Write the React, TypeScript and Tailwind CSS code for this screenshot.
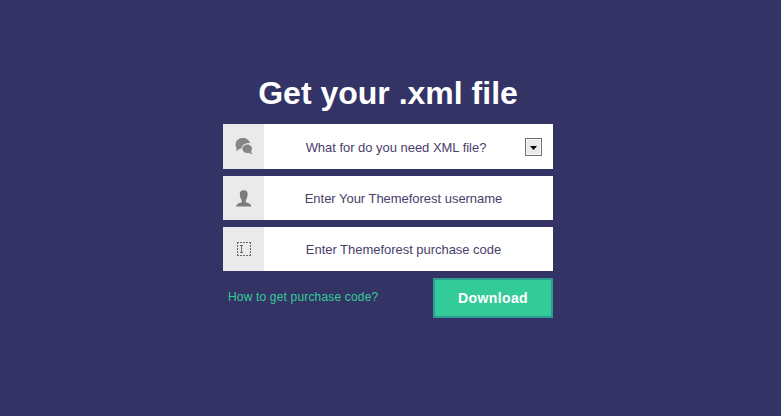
import type { ReactNode } from 'react';

function ChatIcon() {
  return (
    <svg width="18" height="18" viewBox="0 0 18 18" fill="#858585" className="-mt-[2px]">
      <path d="M1 13.800C1.900 12.700 1.700 11.500 1.100 10.300C.5 9 .4 7.600.7 6.300C1.400 3 4.300 1 7.900 1C11.500 1 14.300 3 15 6.400C14 6.100 13 6 12 6.200C9 6.500 6.700 8.500 6.600 11.500C5.600 11.400 4.700 11.500 4 12.300C3.300 13.200 2.300 13.800 1 13.800Z" />
      <path d="M12.200 7.400C15 7.400 17 9.200 17 11.600C17 12.700 16.700 13.500 16.200 14.200C16.200 15.300 16.600 16.200 17.400 17C16 17.200 15 16.800 14.200 15.800C13.600 16 13 16.100 12.200 16.100C9.500 16.100 7.400 14.300 7.400 11.800C7.400 9.200 9.500 7.400 12.200 7.400Z" />
    </svg>
  );
}

function UserIcon() {
  return (
    <svg width="16" height="17" viewBox="0 0 16 17" fill="#7b7b7b">
      <path d="M7.700 0.300C10.400 0.300 11.800 1.500 11.600 4.300C11.500 6.500 11 8.200 10.300 9.300C9.700 10.500 9.500 12 10.300 12.500C12.400 13.400 15 13.500 15.300 16.400H0.100C0.400 13.500 3.200 13.400 5.200 12.500C6 12 5.800 10.500 5.200 9.300C4.400 8.200 3.900 6.500 3.800 4.300C3.700 1.500 5 0.300 7.700 0.300Z" />
    </svg>
  );
}

function TextCursorIcon() {
  return (
    <svg width="14" height="14" viewBox="0 0 14 14" fill="none" stroke="#696969" shapeRendering="crispEdges">
      <path strokeDasharray="2 1" d="M0 0.500H14M0 13.500H14M0.500 0V14M13.500 0V14" />
      <path d="M3 3.500H6M4.500 4V10M3 10.500H6" />
    </svg>
  );
}

function Field({ icon, children, className }: { icon: ReactNode; children: ReactNode; className: string }) {
  return (
    <div className={`flex w-full bg-white ${className}`}>
      <div className="flex w-[41px] shrink-0 items-center justify-center bg-[#eaeaea]">{icon}</div>
      {children}
    </div>
  );
}

const inputClass =
  'min-w-0 flex-1 bg-transparent pt-[2px] pr-[10px] text-center text-[13px] tracking-[-0.03px] text-[#49406b] outline-none placeholder:text-[#49406b] placeholder:opacity-100';

export default function App() {
  return (
    <main className="flex h-[416px] w-full justify-center bg-[#333366] pr-[5px] pt-[74px] font-['Liberation_Sans',Arial,sans-serif]">
      <form className="w-[330px]" onSubmit={(event) => event.preventDefault()}>
        <h1 className="h-[50px] whitespace-nowrap text-center text-[32px] leading-[38px] font-bold text-white">Get your .xml file</h1>
        <div className="flex flex-col gap-[7px]">
          <Field icon={<ChatIcon />} className="h-[45px]">
            <button type="button" className="flex flex-1 items-center pr-[11px] pt-px text-[13px] text-[#49406b]">
              <span className="flex-1 pt-[2px] pl-[3px] text-center tracking-[-0.03px]">What for do you need XML file?</span>
              <span className="flex h-[18px] w-[17px] items-center justify-center border border-[#707070] bg-[#e9e9e9] pt-px shadow-[inset_0_0_0_1px_#f8f8f8]">
                <svg width="7" height="4" viewBox="0 0 7 4"><path d="M0 0H7L3.500 4Z" fill="#000" /></svg>
              </span>
            </button>
          </Field>
          <Field icon={<UserIcon />} className="h-[44px]">
            <input aria-label="Username" placeholder="Enter Your Themeforest username" className={inputClass} />
          </Field>
          <Field icon={<span className="pl-px"><TextCursorIcon /></span>} className="h-[44px]">
            <input aria-label="Purchase code" placeholder="Enter Themeforest purchase code" className={inputClass} />
          </Field>
          <div className="flex h-[40px] justify-between">
            <a href="#" className="pl-[5px] pt-[9px] text-[12px] leading-[20px] tracking-[0.17px] text-[#33cc99]">How to get purchase code?</a>
            <button className="w-[120px] border-2 border-[#2e9e93] bg-[#33cc99] text-[14px] font-bold tracking-[0.4px] text-white">Download</button>
          </div>
        </div>
      </form>
    </main>
  );
}
